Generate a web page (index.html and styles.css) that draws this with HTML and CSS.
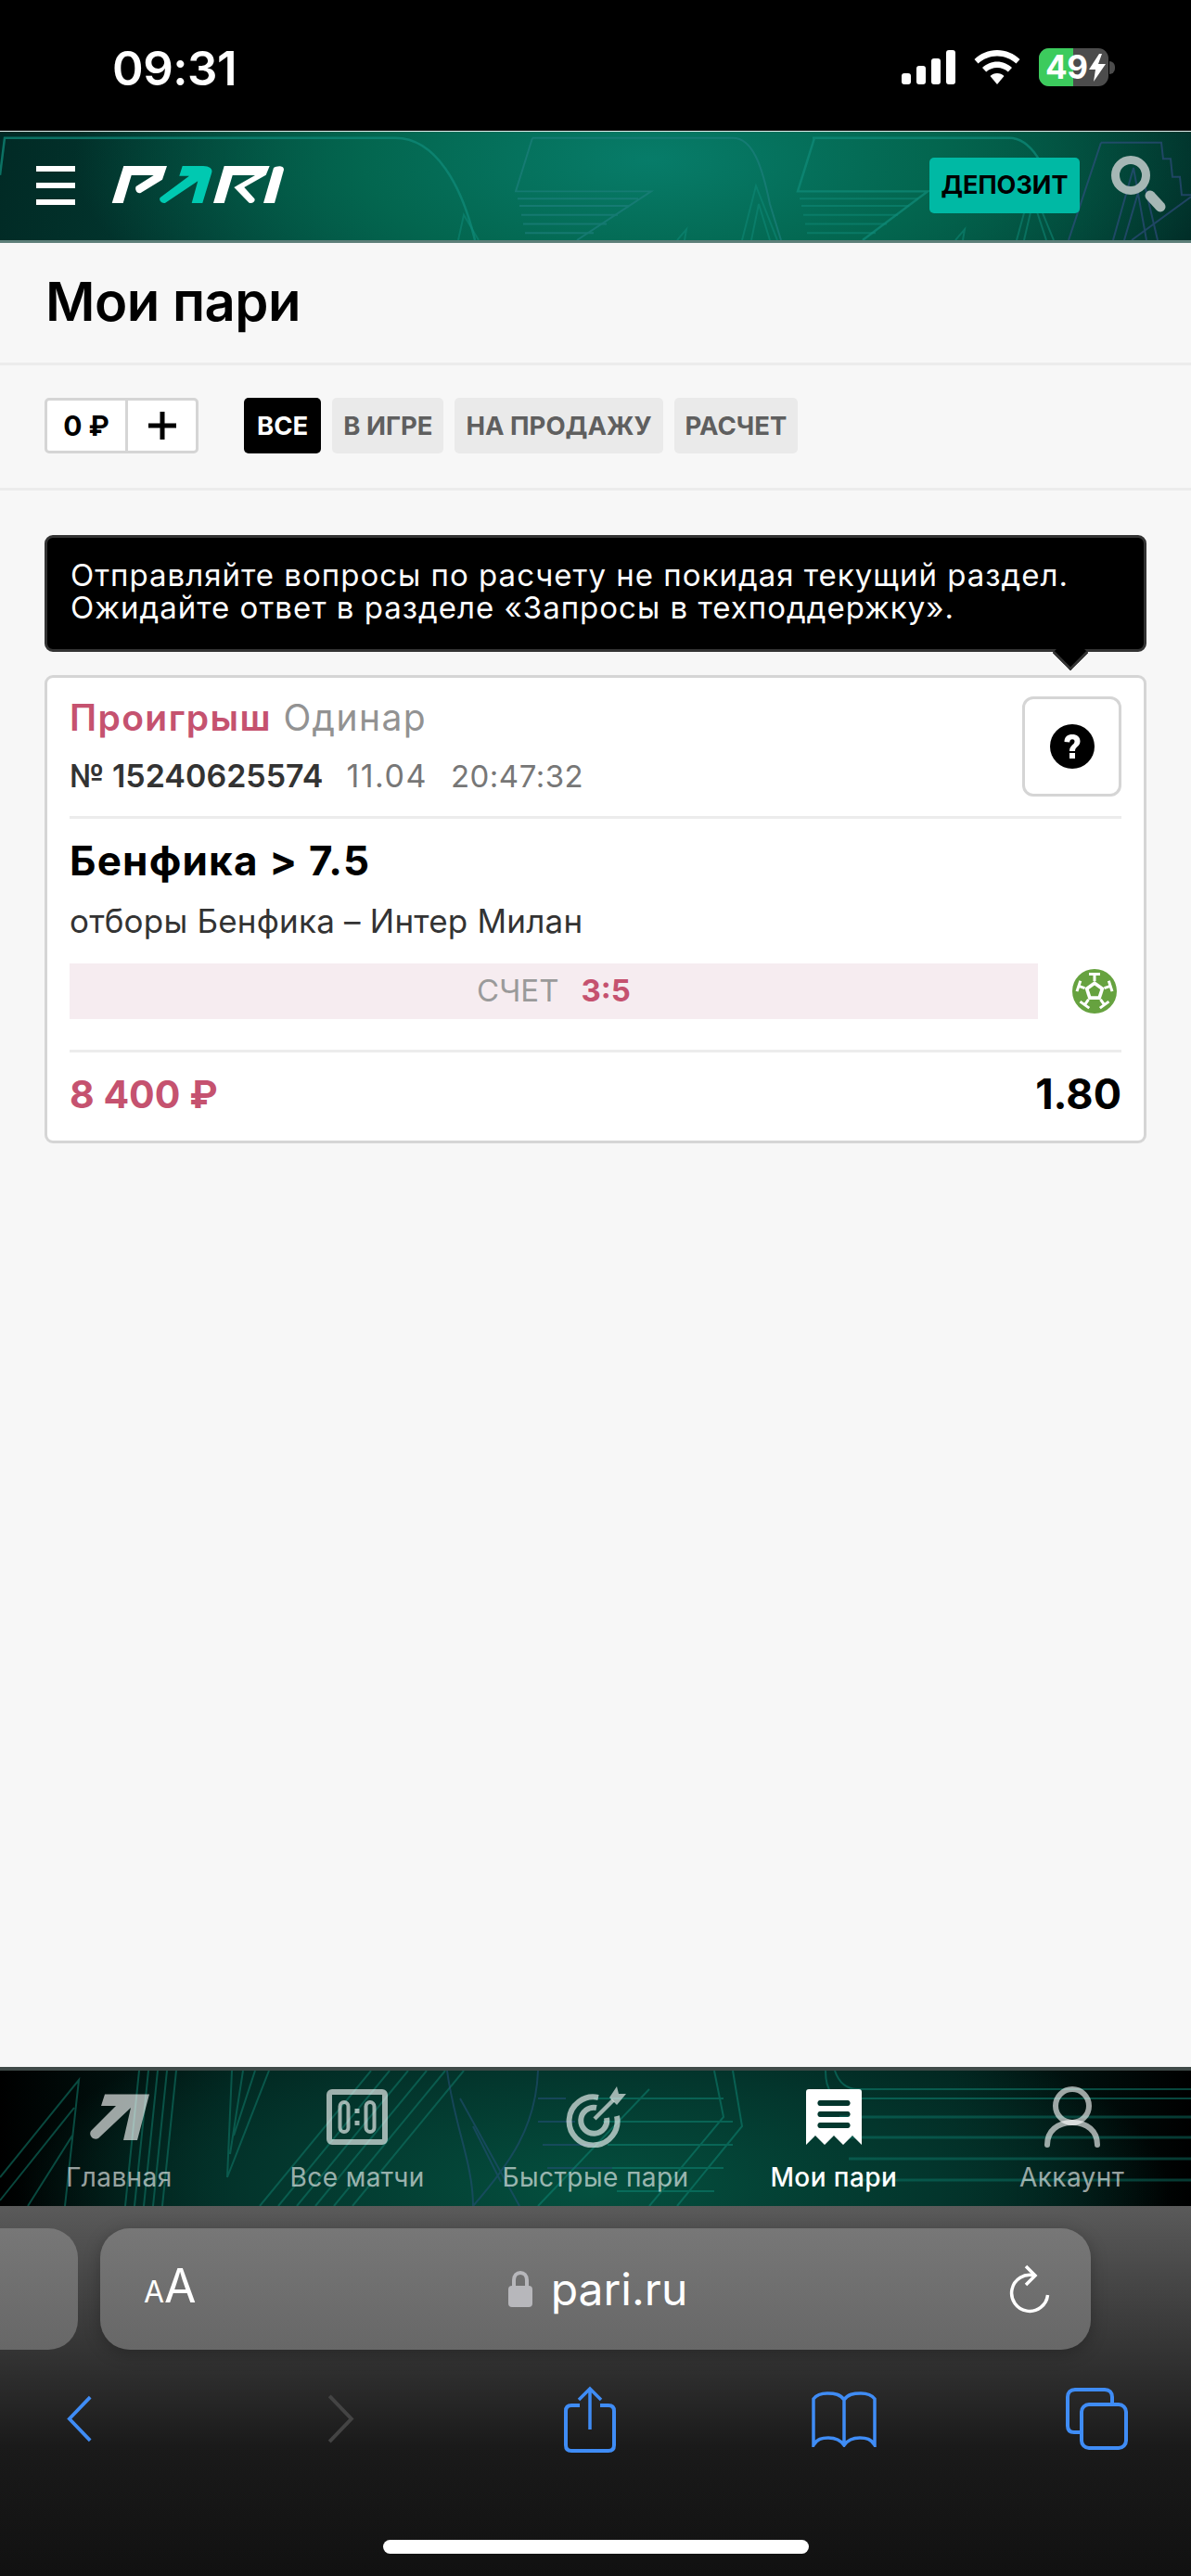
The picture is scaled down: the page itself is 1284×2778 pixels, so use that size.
FILE: index.html
```html
<!DOCTYPE html>
<html lang="ru">
<head>
<meta charset="utf-8">
<title>Мои пари</title>
<link rel="stylesheet" href="styles.css">
</head>
<body>
<div class="phone">
  <div class="statusbar">
    <span class="clock">09:31</span>
    <div class="status-icons">
      <svg class="ic-signal" viewBox="0 0 58 37"><rect x="0" y="25" width="10" height="12" rx="3"/><rect x="16" y="17" width="10" height="20" rx="3"/><rect x="32" y="9" width="10" height="28" rx="3"/><rect x="48" y="0" width="10" height="37" rx="3"/></svg>
      <svg class="ic-wifi" viewBox="0 0 50 37"><path d="M25 0C15.500 0 7 3.800 0.500 10L4.500 14.500C10 9.500 17 6.500 25 6.500S40 9.500 45.500 14.500L49.500 10C43 3.800 34.500 0 25 0Z"/><path d="M25 12.500C19 12.500 13.500 15 9 19L13.200 23.500C16.500 20.600 20.500 19 25 19S33.500 20.600 36.800 23.500L41 19C36.500 15 31 12.500 25 12.500Z"/><path d="M25 25C22 25 19.500 26 17.500 28L25 37L32.500 28C30.500 26 28 25 25 25Z"/></svg>
      <div class="battery">
        <div class="battery-body"><div class="battery-fill"></div><span class="battery-num">49</span>
          <svg class="ic-bolt" viewBox="0 0 18 30"><path d="M11 0L0 17H7L5 30L18 11H10L14 0Z"/></svg>
        </div>
        <div class="battery-nub"></div>
      </div>
    </div>
  </div>

  <header class="topbar">
    <svg class="bg-art" viewBox="0 0 1284 120" preserveAspectRatio="none" aria-hidden="true">
      <g fill="none" stroke="#0f8a78" stroke-width="2.500" opacity=".75">
        <path d="M0 48L5 7H426C470 7 498 60 512 120"/>
        <path d="M876 7H1088C1112 7 1128 40 1136 70"/>
        <path d="M878 7L860 66H1000L930 120"/>
      </g>
      <g fill="none" stroke="#1d7f7c" stroke-width="2" opacity=".7">
        <path d="M574 7H790C812 7 822 40 830 80L842 120"/>
        <path d="M574 7L556 66H702L622 120"/>
        <path d="M558 74H688M560 82H678M562 92H666M564 102H654M566 112H640"/>
      </g>
      <g fill="none" stroke="#0f8a78" stroke-width="2" opacity=".55">
        <path d="M862 74H990M864 82H980M866 92H968M868 102H956M870 112H944"/>
        <path d="M1096 120L1112 60L1136 120M1104 120L1114 76L1128 120"/>
        <path d="M494 120L500 92L516 120M730 120L740 108L738 120M1030 120L1040 108L1038 120"/>
        <path d="M800 120L815 60L838 120M810 120L818 80L830 120"/>
      </g>
      <g fill="none" stroke="#39508f" stroke-width="2" opacity=".55">
        <path d="M1187 12H1252L1254 30H1262L1264 50H1272L1274 70H1284"/>
        <path d="M1187 12L1152 120M1220 120L1284 72"/>
        <path d="M1200 120L1222 40L1236 120M1212 120L1232 50L1248 120"/>
      </g>
    </svg>
    <div class="topbar-left">
      <div class="burger"><i></i><i></i><i></i></div>
      <svg class="logo" viewBox="0 0 186 41">
        <path class="logo-w" d="M.7 40H12.700L21.700 10H45.700L26.700 22C25 25 27.500 30.500 31.700 29L55 14.700L60 0H13.300Z"/>
        <path class="logo-a" d="M76.700 0H99C105.500 0 109.500 3 108.300 7L98.300 40H86.700L93.300 16.300L58.300 39.700C55 41 50.500 37 52.700 34L84 10.700H73.300Z"/>
        <path class="logo-w" d="M110 40H121.700L130.700 10H155L132.300 23L148.300 39.500C151 41.500 156 38 154.300 35.300L143.300 23L166.700 9.700L170.700 0H121.700Z"/>
        <path class="logo-w" d="M175 2C178 0 186 -1 186 4L176 40H164Z"/>
      </svg>
    </div>
    <div class="topbar-right">
      <button class="deposit">ДЕПОЗИТ</button>
      <svg class="ic-search" viewBox="0 0 62 62"><circle cx="21" cy="21" r="16.500" fill="none" stroke-width="9"/><line x1="42" y1="43" x2="53" y2="55" stroke-width="11" stroke-linecap="round"/></svg>
    </div>
  </header>

  <section class="page-title"><h1>Мои пари</h1></section>

  <section class="filters">
    <div class="stake"><span class="stake-val">0 ₽</span><span class="stake-plus"><svg viewBox="0 0 32 32"><path d="M16 1V31M1 16H31"/></svg></span></div>
    <div class="chips">
      <span class="chip chip-on">ВСЕ</span>
      <span class="chip">В ИГРЕ</span>
      <span class="chip">НА ПРОДАЖУ</span>
      <span class="chip">РАСЧЕТ</span>
    </div>
  </section>

  <main class="content">
    <div class="tooltip">Отправляйте вопросы по расчету не покидая текущий раздел.<br>Ожидайте ответ в разделе «Запросы в техподдержку».<span class="tooltip-tip"></span></div>
    <article class="bet">
      <div class="bet-head">
        <div class="bet-meta">
          <div class="bet-status"><b>Проигрыш</b> <span>Одинар</span></div>
          <div class="bet-id"><b>№ 15240625574</b><span class="bet-date">11.04</span><span class="bet-time">20:47:32</span></div>
        </div>
        <button class="help"><svg viewBox="0 0 48 48"><circle cx="24" cy="24" r="24" fill="#000"/><path d="M15.500 19C15.500 13.500 19 11 24 11C29 11 32.500 13.500 32.500 18.500C32.500 24 27 24 27 29H21C21 22.500 26.500 22.500 26.500 18.500C26.500 17 25.500 16.200 24 16.200C22.500 16.200 21.200 17.300 21.200 19.500Z" fill="#fff"/><rect x="21" y="31" width="6" height="6" fill="#fff"/></svg></button>
      </div>
      <div class="bet-body">
        <h2>Бенфика &gt; 7.5</h2>
        <p>отборы Бенфика – Интер Милан</p>
        <div class="score-row">
          <div class="score"><span>СЧЕТ</span><b>3:5</b></div>
          <svg class="ball" viewBox="0 0 48 48">
            <circle cx="24" cy="24" r="24" fill="#66a23f"/>
            <path d="M24 13L34.500 20.600L30.500 32.900H17.500L13.500 20.600Z" fill="#fff"/>
            <g fill="none" stroke="#fff" stroke-width="3">
              <path d="M24 13V6M34.500 20.600L41.100 18.400M30.500 32.900L34.600 38.600M17.500 32.900L13.400 38.600M13.500 20.600L6.900 18.400"/>
              <path d="M18 5.500H30M39.300 12.700L43 24.100M39.400 35.100L29.800 42.100M8.500 35.100L18.300 42.100M8.800 12.700L5 24.100"/>
            </g>
            <path d="M24 17.500L30.200 22L27.800 29.300H20.200L17.800 22Z" fill="#66a23f"/>
          </svg>
        </div>
      </div>
      <div class="bet-foot"><span class="amount">8 400 ₽</span><span class="odds">1.80</span></div>
    </article>
  </main>

  <nav class="tabbar">
    <svg class="bg-art" viewBox="0 0 1284 146" preserveAspectRatio="none" aria-hidden="true">
      <g fill="none" stroke="#0f7565" stroke-width="2" opacity=".6">
        <path d="M0 115L85 10L70 146M0 140L80 40M30 146L78 70"/>
        <path d="M150 0L135 146M160 0L145 146M170 0L155 146M180 0L165 146M190 0L175 146"/>
        <path d="M250 0L245 115L290 0M262 0L248 90M275 0L252 70"/>
        <path d="M280 146L400 0M300 146L420 0M320 146L440 0M340 146L460 0M360 146L480 0M380 146L500 0"/>
      </g>
      <g fill="none" stroke="#26507a" stroke-width="2" opacity=".55">
        <path d="M482 0C490 60 510 100 510 146M580 0C578 60 550 100 510 146M496 30L560 146M510 60L540 120"/>
        <path d="M580 30H610M580 55H620M585 80H640M590 105H660"/>
      </g>
      <g fill="none" stroke="#0f8a78" stroke-width="2" opacity=".5">
        <path d="M640 30H780M650 55H790M655 80H790M660 105H780M665 130H770"/>
        <path d="M700 146L780 50L770 0M730 146L800 60L790 0M580 146L700 20"/>
        <path d="M890 0C890 25 900 30 915 30H1284M900 0C905 15 915 20 925 20H1284"/>
      </g>
      <g fill="none" stroke="#0d7f6f" stroke-width="3" opacity=".45">
        <path d="M905 50H1284M910 72H1284M915 95H1284M920 118H1284"/>
      </g>
    </svg>
    <a class="tab">
      <svg viewBox="0 0 66 60"><path d="M18 10.500H66L53 60H38L46 25L11 58C6 61 0 55 3 50L30 23H14Z" transform="translate(0 -5)" class="fill"/></svg>
      <span>Главная</span>
    </a>
    <a class="tab">
      <svg viewBox="0 0 66 60"><rect x="3" y="3" width="60" height="54" rx="3" fill="none" stroke="currentColor" stroke-width="6"/><rect x="14.500" y="14" width="9" height="32" rx="4.500" fill="none" stroke="currentColor" stroke-width="4"/><rect x="42.500" y="14" width="9" height="32" rx="4.500" fill="none" stroke="currentColor" stroke-width="4"/><rect x="30.500" y="21" width="5" height="5" class="fill"/><rect x="30.500" y="34" width="5" height="5" class="fill"/></svg>
      <span>Все матчи</span>
    </a>
    <a class="tab tab-tall">
      <svg viewBox="0 0 66 66"><path d="M36 12A26 26 0 1 0 56 32" fill="none" stroke="currentColor" stroke-width="6"/><path d="M34 23A14 14 0 1 0 45 34" fill="none" stroke="currentColor" stroke-width="6"/><line x1="32" y1="35" x2="52" y2="15" stroke="currentColor" stroke-width="4.500"/><path d="M48 12L56 0L58 8L66 8L56 20Z" class="fill"/></svg>
      <span>Быстрые пари</span>
    </a>
    <a class="tab tab-on">
      <svg viewBox="0 0 60 60"><path d="M3 0H57C59 0 60 1 60 3V60L50 50L40 60L30 50L20 60L10 50L0 60V3C0 1 1 0 3 0ZM15 12C11.500 12 11.500 18 15 18H45C48.500 18 48.500 12 45 12ZM15 24C11.500 24 11.500 30 15 30H45C48.500 30 48.500 24 45 24ZM15 36C11.500 36 11.500 42 15 42H45C48.500 42 48.500 36 45 36Z" class="fill" fill-rule="evenodd"/></svg>
      <span>Мои пари</span>
    </a>
    <a class="tab tab-tall">
      <svg viewBox="0 0 60 66"><circle cx="30" cy="21" r="18" fill="none" stroke="currentColor" stroke-width="6"/><path d="M3 63C3 48 14 39 30 39S57 48 57 63" fill="none" stroke="currentColor" stroke-width="6" stroke-linecap="round"/></svg>
      <span>Аккаунт</span>
    </a>
  </nav>

  <div class="browser">
    <div class="url-row">
      <div class="tab-peek"></div>
      <div class="url-pill">
        <span class="aa"><small>A</small>A</span>
        <span class="domain">
          <svg class="ic-lock" viewBox="0 0 26 39"><path d="M6 18V10C6 5 9 2 13 2S20 5 20 10V18" fill="none" stroke="#b7b7bb" stroke-width="4"/><rect x="0" y="16" width="26" height="23" rx="4" fill="#b7b7bb"/></svg>
          pari.ru
        </span>
        <svg class="ic-reload" viewBox="0 0 44 54"><path d="M27 12A19.500 19.500 0 1 0 41.500 33" fill="none" stroke="#fff" stroke-width="3.500"/><path d="M18 2L28 12L18 22" fill="none" stroke="#fff" stroke-width="3.500"/></svg>
      </div>
    </div>
    <div class="toolbar">
      <svg class="ic-back" viewBox="0 0 30 54"><path d="M27 2L3 27L27 52" fill="none" stroke="#3f8cf5" stroke-width="4"/></svg>
      <svg class="ic-fwd" viewBox="0 0 30 54"><path d="M3 2L27 27L3 52" fill="none" stroke="#444" stroke-width="4"/></svg>
      <svg class="ic-share" viewBox="0 0 56 72"><path d="M17 21H8C4 21 2 23 2 27V64C2 68 4 70 8 70H48C52 70 54 68 54 64V27C54 23 52 21 48 21H39" fill="none" stroke="#3f8cf5" stroke-width="4"/><path d="M28 47V3M16 15L28 3L40 15" fill="none" stroke="#3f8cf5" stroke-width="3.500"/></svg>
      <svg class="ic-book" viewBox="0 0 70 60"><path d="M35 9C31 3 25 2 17 2C10 2 5 4 2 8V58C6 51 11 50 18 50C25 50 31 52 35 58C39 52 45 50 52 50C59 50 64 51 68 58V8C65 4 60 2 53 2C45 2 39 3 35 9ZM35 9V58" fill="none" stroke="#3f8cf5" stroke-width="3.500"/></svg>
      <svg class="ic-tabs" viewBox="0 0 67 67"><path d="M15 48H9C5 48 2 46 2 41V10C2 5 5 2 10 2H42C47 2 50 5 50 10V16" fill="none" stroke="#3f8cf5" stroke-width="4"/><rect x="17" y="18" width="48" height="47" rx="8" fill="none" stroke="#3f8cf5" stroke-width="4"/></svg>
    </div>
    <div class="home-indicator"></div>
  </div>
</div>
</body>
</html>
```
FILE: styles.css
```css
* { box-sizing: border-box; }
html, body { margin: 0; padding: 0; }
body { background: #f7f7f7; font-family: Inter, "Noto Sans", sans-serif; color: #000; }
.phone { width: 1284px; height: 2778px; display: flex; flex-direction: column; overflow: hidden; }

/* status bar */
.statusbar { height: 141px; flex: none; background: #000; color: #fff; display: flex; justify-content: space-between; align-items: flex-start; padding: 45px 82px 0 121px; }
.clock { font-size: 51px; font-weight: 600; line-height: 58px; letter-spacing: -.5px; }
.status-icons { display: flex; align-items: center; gap: 20px; margin-top: 7px; }
.ic-signal { width: 58px; height: 37px; fill: #fff; }
.ic-wifi { width: 50px; height: 37px; fill: #fff; }
.battery { display: flex; align-items: center; gap: 1px; }
.battery-body { position: relative; width: 75px; height: 41px; background: #4c4c4c; border-radius: 11px; overflow: hidden; display: flex; align-items: center; padding-left: 7px; }
.battery-fill { position: absolute; left: 0; top: 0; bottom: 0; width: 37px; background: #3ccb5d; }
.battery-num { position: relative; color: #fff; font-size: 35px; font-weight: 700; line-height: 41px; letter-spacing: -.5px; }
.ic-bolt { position: relative; width: 18px; height: 30px; fill: #fff; margin-left: 2px; }
.battery-nub { width: 6px; height: 14px; background: #4c4c4c; border-radius: 0 7px 7px 0; }

/* top bar */
.topbar { position: relative; height: 121px; flex: none; border-top: 1px solid #e6f2ef; border-bottom: 3px solid #5d7f79; background: radial-gradient(ellipse 620px 240px at 700px 30px, #077c69 0%, #03664f 50%, rgba(3,70,60,0) 100%), linear-gradient(100deg, #012a25 0%, #03473c 35%, #03503f 70%, #012e28 100%); display: flex; justify-content: space-between; align-items: center; padding: 0 24px 2px 39px; overflow: hidden; }
.bg-art { position: absolute; left: 0; top: 0; width: 100%; height: 100%; }
.topbar-left, .topbar-right { position: relative; display: flex; align-items: center; }
.topbar-left { gap: 39px; }
.topbar-right { gap: 34px; }
.burger { width: 42px; display: flex; flex-direction: column; gap: 12px; }
.burger i { display: block; height: 6px; background: #fff; }
.logo { width: 186px; height: 41px; }
.logo-w { fill: #fff; }
.logo-a { fill: #00c9b1; }
.deposit { height: 60px; width: 162px; background: #00b9a4; border: 0; border-radius: 5px; font-family: inherit; font-size: 27px; font-weight: 700; color: #000; padding: 0; }
.ic-search { width: 62px; height: 62px; stroke: #a6b7b5; margin-top: -2px; }

/* title */
.page-title { flex: none; height: 132px; border-bottom: 3px solid #ececec; display: flex; align-items: center; padding: 0 49px 3px; }
.page-title h1 { margin: 0; font-size: 58px; font-weight: 600; line-height: 66px; letter-spacing: -.5px; }

/* filters */
.filters { flex: none; height: 135px; border-bottom: 3px solid #ececec; display: flex; align-items: center; padding: 0 48px 3px; gap: 49px; }
.stake { display: flex; width: 166px; height: 60px; background: #fff; border: 3px solid #d5d5d5; border-radius: 5px; }
.stake-val { flex: none; width: 87px; display: flex; align-items: center; justify-content: center; border-right: 3px solid #d5d5d5; font-size: 30px; font-weight: 700; }
.stake-plus { flex: 1; display: flex; align-items: center; justify-content: center; }
.stake-plus svg { width: 32px; height: 32px; fill: none; stroke: #000; stroke-width: 5; }
.chips { display: flex; gap: 12px; }
.chip { height: 60px; display: flex; align-items: center; padding: 0 12px; background: #eaeaea; border-radius: 5px; font-size: 27.500px; font-weight: 700; color: #5f5f5f; }
.chip-on { background: #000; color: #fff; padding: 0 14px; }

/* content */
.content { flex: 1; padding: 48px 48px 0; }
.tooltip { position: relative; height: 126px; background: #000; border: 3px solid #333; border-radius: 9px; color: #fff; font-size: 33px; line-height: 35px; padding: 23px 25px 0; letter-spacing: 1px; }
.tooltip-tip { position: absolute; right: 64px; bottom: -19px; width: 30px; height: 30px; background: #000; border-right: 3px solid #333; border-bottom: 3px solid #333; transform: rotate(45deg) scale(.9); }
.bet { margin-top: 25px; background: #fff; border: 3px solid #d5d5d5; border-radius: 9px; padding: 0 24px; height: 505px; }
.bet-head { display: flex; justify-content: space-between; height: 152px; border-bottom: 3px solid #ececec; padding-top: 20px; }
.bet-status { font-size: 39px; font-weight: 400; line-height: 46px; color: #929292; letter-spacing: 1.400px; }
.bet-status b { color: #c5526f; font-weight: 600; }
.bet-id { margin-top: 20px; display: flex; gap: 25px; font-size: 34px; line-height: 40px; color: #777; }
.bet-id b { font-weight: 600; color: #333; }
.bet-date { letter-spacing: 1.500px; }
.bet-time { font-size: 33px; letter-spacing: .5px; }
.help { width: 107px; height: 108px; background: #fff; border: 3px solid #d5d5d5; border-radius: 12px; display: flex; align-items: center; justify-content: center; padding: 0; }
.help svg { width: 48px; height: 48px; }
.bet-body { height: 252px; border-bottom: 3px solid #ececec; padding-top: 20px; }
.bet-body h2 { margin: 0; font-size: 44px; font-weight: 700; line-height: 50px; letter-spacing: 1.200px; }
.bet-body p { margin: 20px 0 0; font-size: 35px; line-height: 40px; color: #333; letter-spacing: .2px; }
.score-row { margin-top: 26px; display: flex; align-items: center; justify-content: space-between; padding-right: 5px; }
.score { width: 1044px; height: 60px; background: #f6ecf0; display: flex; align-items: center; justify-content: center; gap: 24px; padding-bottom: 2px; font-size: 33px; color: #9a9a9a; }
.score b { color: #c5526f; font-weight: 700; }
.ball { width: 48px; height: 48px; }
.bet-foot { display: flex; justify-content: space-between; align-items: center; height: 95px; font-size: 41px; font-weight: 700; padding-bottom: 6px; }
.amount { color: #c5526f; }
.odds { font-size: 45px; }

/* tab bar */
.tabbar { position: relative; flex: none; height: 150px; border-top: 4px solid #3f4a48; background: radial-gradient(ellipse 620px 220px at 640px 130px, #04503f 0%, #03352c 60%, rgba(2,30,25,0) 100%), linear-gradient(90deg, #000 0%, #01201b 20%, #01201b 80%, #000 100%); display: grid; grid-template-columns: repeat(5, 1fr); overflow: hidden; }
.tab { position: relative; display: flex; flex-direction: column; align-items: center; padding-top: 20px; color: rgba(255,255,255,.62); font-size: 28px; line-height: 34px; letter-spacing: .4px; }
.tab svg { width: 66px; height: 60px; }
.tab-tall svg { height: 66px; margin: -3px 0; }
.tab .fill { fill: currentColor; }
.tab span { margin-top: 18px; }
.tab-on { color: #fff; font-weight: 500; }

/* browser */
.browser { flex: none; height: 399px; background: linear-gradient(180deg, #5a5a5a 0%, #333 40%, #1a1a1a 65%, #111 100%); display: flex; flex-direction: column; }
.url-row { display: flex; gap: 24px; margin-top: 24px; height: 131px; }
.tab-peek { width: 84px; background: linear-gradient(180deg, #777, #676767); border-radius: 0 32px 32px 0; }
.url-pill { width: 1068px; background: linear-gradient(180deg, #777, #676767); border-radius: 32px; display: flex; align-items: center; justify-content: space-between; padding: 0 44px 0 47px; color: #fff; box-shadow: 0 4px 18px rgba(0,0,0,.25); }
.aa { font-size: 50px; line-height: 50px; width: 60px; }
.aa small { font-size: 32px; }
.domain { display: flex; align-items: center; gap: 20px; font-size: 48px; line-height: 56px; margin-left: -14px; }
.ic-lock { width: 26px; height: 39px; }
.ic-reload { width: 44px; height: 54px; }
.toolbar { height: 73px; margin-top: 38px; display: flex; align-items: center; padding-left: 72px; }
.ic-back { width: 28px; height: 53px; margin-right: 252px; }
.ic-fwd { width: 30px; height: 53px; margin-right: 226px; }
.ic-share { width: 56px; height: 72px; margin-right: 211px; }
.ic-book { width: 70px; height: 60px; margin-right: 204px; }
.ic-tabs { width: 67px; height: 67px; }
.home-indicator { width: 459px; height: 15px; background: #fff; border-radius: 8px; margin: 94px auto 0; }
```
